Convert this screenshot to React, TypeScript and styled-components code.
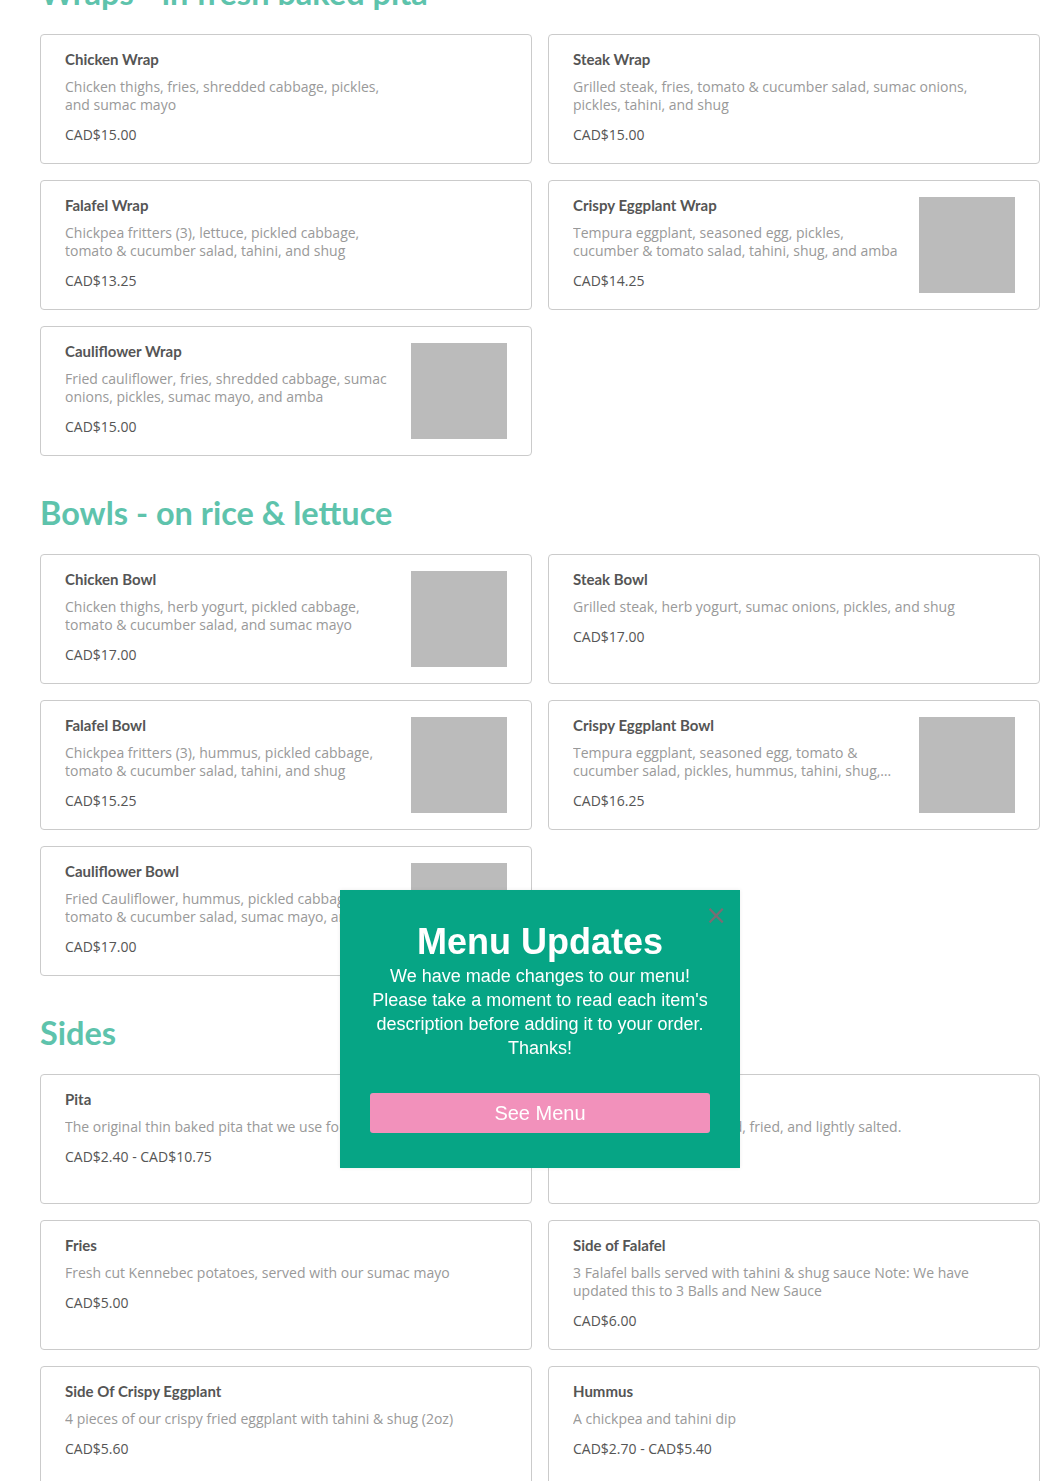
import styled, {createGlobalStyle} from 'styled-components';

type MenuItem = {
    name: string
    description: string
    price: string
    image?: 'photo' | 'blank'
}

type MenuSection = {
    title: string
    items: MenuItem[]
}

const sections: MenuSection[] = [
    {
        title: 'Wraps - in fresh baked pita',
        items: [
            {name: 'Chicken Wrap', description: 'Chicken thighs, fries, shredded cabbage, pickles, and sumac mayo', price: 'CAD$15.00', image: 'blank'},
            {name: 'Steak Wrap', description: 'Grilled steak, fries, tomato & cucumber salad, sumac onions, pickles, tahini, and shug', price: 'CAD$15.00'},
            {name: 'Falafel Wrap', description: 'Chickpea fritters (3), lettuce, pickled cabbage, tomato & cucumber salad, tahini, and shug', price: 'CAD$13.25', image: 'blank'},
            {name: 'Crispy Eggplant Wrap', description: 'Tempura eggplant, seasoned egg, pickles, cucumber & tomato salad, tahini, shug, and amba', price: 'CAD$14.25', image: 'photo'},
            {name: 'Cauliflower Wrap', description: 'Fried cauliflower, fries, shredded cabbage, sumac onions, pickles, sumac mayo, and amba', price: 'CAD$15.00', image: 'photo'},
        ]
    },
    {
        title: 'Bowls - on rice & lettuce',
        items: [
            {name: 'Chicken Bowl', description: 'Chicken thighs, herb yogurt, pickled cabbage, tomato & cucumber salad, and sumac mayo', price: 'CAD$17.00', image: 'photo'},
            {name: 'Steak Bowl', description: 'Grilled steak, herb yogurt, sumac onions, pickles, and shug', price: 'CAD$17.00'},
            {name: 'Falafel Bowl', description: 'Chickpea fritters (3), hummus, pickled cabbage, tomato & cucumber salad, tahini, and shug', price: 'CAD$15.25', image: 'photo'},
            {name: 'Crispy Eggplant Bowl', description: 'Tempura eggplant, seasoned egg, tomato & cucumber salad, pickles, hummus, tahini, shug, and amba', price: 'CAD$16.25', image: 'photo'},
            {name: 'Cauliflower Bowl', description: 'Fried Cauliflower, hummus, pickled cabbage, tomato & cucumber salad, sumac mayo, and amba', price: 'CAD$17.00', image: 'photo'},
        ]
    },
    {
        title: 'Sides',
        items: [
            {name: 'Pita', description: 'The original thin baked pita that we use for all our wraps', price: 'CAD$2.40 - CAD$10.75'},
            {name: 'Side of Cauliflower', description: 'Cauliflower florets, tossed, fried, and lightly salted.', price: 'CAD$6.00'},
            {name: 'Fries', description: 'Fresh cut Kennebec potatoes, served with our sumac mayo', price: 'CAD$5.00'},
            {name: 'Side of Falafel', description: '3 Falafel balls served with tahini & shug sauce Note: We have updated this to 3 Balls and New Sauce', price: 'CAD$6.00'},
            {name: 'Side Of Crispy Eggplant', description: '4 pieces of our crispy fried eggplant with tahini & shug (2oz)', price: 'CAD$5.60'},
            {name: 'Hummus', description: 'A chickpea and tahini dip', price: 'CAD$2.70 - CAD$5.40'},
        ]
    }
]

export default function App() {
    return (
        <>
            <GlobalStyle/>
            <Page>
                {sections.map((section) => (
                    <section key={section.title}>
                        <SectionTitle>{section.title}</SectionTitle>
                        <CardGrid>
                            {section.items.map((item) => (
                                <Card key={item.name}>
                                    <CardText>
                                        <ItemName>{item.name}</ItemName>
                                        <ItemDescription>{item.description}</ItemDescription>
                                        <ItemPrice>{item.price}</ItemPrice>
                                    </CardText>
                                    {item.image && <Thumb $blank={item.image === 'blank'}/>}
                                </Card>
                            ))}
                        </CardGrid>
                    </section>
                ))}
            </Page>
            <Popup>
                <CloseButton aria-label="Close">×</CloseButton>
                <PopupTitle>Menu Updates</PopupTitle>
                <PopupText>
                    We have made changes to our menu! Please take a moment to read each item's description before adding it to your order. Thanks!
                </PopupText>
                <PopupButton>See Menu</PopupButton>
            </Popup>
        </>
    )
}

const GlobalStyle = createGlobalStyle`
    body {
        margin: 0;
        background: #fff;
        font-family: "Open Sans", "Liberation Sans", sans-serif;
        overflow: hidden;
    }
`;

const Page = styled.main`
    margin-top: -64px;
    padding: 0 20px 0 40px;
`;

const SectionTitle = styled.h2`
    margin: 37px 0 21px;
    font-family: Lato, "Open Sans", sans-serif;
    font-weight: 700;
    font-size: 32.5px;
    line-height: 40px;
    color: #5ec3ac;
`;

const CardGrid = styled.div`
    display: grid;
    grid-template-columns: 1fr 1fr;
    gap: 16px;
`;

const Card = styled.article`
    display: flex;
    gap: 16px;
    box-sizing: border-box;
    min-height: 130px;
    padding: 16px 24px;
    border: 1px solid #cbcbcb;
    border-radius: 4px;
    background: #fff;
`;

const CardText = styled.div`
    flex: 1;
    min-width: 0;
    margin-top: -1px;
`;

const ItemName = styled.h3`
    margin: 0 0 10px;
    font-family: Lato, "Open Sans", sans-serif;
    font-weight: 700;
    font-size: 15px;
    line-height: 18px;
    color: #555;
`;

const ItemDescription = styled.p`
    margin: 0 0 12px;
    font-size: 14px;
    line-height: 18px;
    color: #999;
    display: -webkit-box;
    -webkit-line-clamp: 2;
    -webkit-box-orient: vertical;
    overflow: hidden;
`;

const ItemPrice = styled.div`
    font-size: 14px;
    line-height: 18px;
    color: #555;
`;

const Thumb = styled.div<{$blank: boolean}>`
    flex: 0 0 96px;
    height: 96px;
    background: ${(p) => (p.$blank ? 'transparent' : '#bbbbbb')};
`;

const Popup = styled.div`
    position: fixed;
    top: 890px;
    left: 340px;
    width: 400px;
    box-sizing: border-box;
    padding: 30px 30px 35px;
    background: #06a585;
    text-align: center;
    font-family: "Liberation Sans", Arial, sans-serif;
    color: #fff;
    box-shadow: 0 0 4px rgba(0, 0, 0, 0.08);
`;

const CloseButton = styled.button`
    position: absolute;
    top: 12px;
    right: 13px;
    padding: 0;
    border: none;
    background: none;
    font-family: "DejaVu Sans", "Liberation Sans", sans-serif;
    font-size: 26px;
    line-height: 26px;
    color: #7a6c73;
    cursor: pointer;
`;

const PopupTitle = styled.h2`
    margin: 0;
    font-size: 36px;
    line-height: 44px;
    font-weight: 700;
`;

const PopupText = styled.p`
    margin: 0;
    font-size: 18px;
    line-height: 24px;
`;

const PopupButton = styled.button`
    display: block;
    width: 100%;
    height: 40px;
    margin-top: 33px;
    border: none;
    border-radius: 3px;
    background: #f291bb;
    color: #fff;
    font-family: "Liberation Sans", Arial, sans-serif;
    font-size: 20px;
    cursor: pointer;
`;
